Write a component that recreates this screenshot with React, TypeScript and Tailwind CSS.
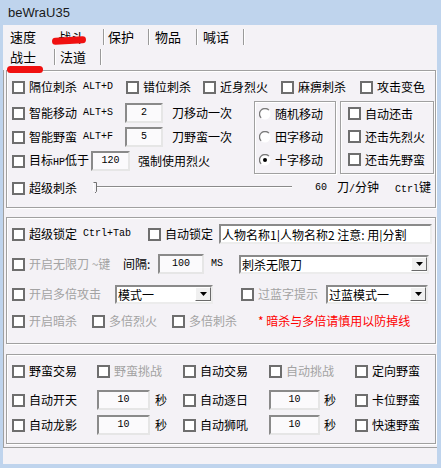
import type { ReactNode } from 'react'

const MONO = "font-['Liberation_Mono',monospace] text-[10px]"

function Box() {
  return <span className="block h-[13px] w-[13px] shrink-0 border-2 border-[#6e6e6e] bg-white" />
}

function Check({ label, off, w, children }: { label: ReactNode; off?: boolean; w?: string; children?: ReactNode }) {
  return (
    <div className={`flex shrink-0 items-center gap-[4px] ${w ?? ''}`}>
      <Box />
      <span className={`leading-[14px] ${off ? 'text-[#a3a3a3]' : ''}`}>{label}</span>
      {children}
    </div>
  )
}

function Radio({ on }: { on?: boolean }) {
  return (
    <svg width="12" height="12" viewBox="0 0 12 12" className="shrink-0">
      <circle cx="6" cy="6" r="5.5" fill="#fff" />
      <path d="M2.1 9.9A5.5 5.5 0 0 1 9.9 2.1" fill="none" stroke="#7a7a7a" strokeWidth="1.3" />
      {on && <circle cx="6" cy="6" r="2" fill="#000" />}
    </svg>
  )
}

function Edit({ v, w }: { v: string; w: string }) {
  return (
    <div
      className={`flex h-[20px] shrink-0 items-center justify-center border-2 border-t-[#8a8a8a] border-l-[#8a8a8a] border-r-[#e6e6e6] border-b-[#e6e6e6] bg-[#fbfafc] leading-[14px] ${MONO} ${w}`}
    >
      {v}
    </div>
  )
}

function Combo({ v, w }: { v: string; w: string }) {
  return (
    <div
      className={`flex h-[19px] shrink-0 items-center border-2 border-t-[#8a8a8a] border-l-[#8a8a8a] border-r-[#ececec] border-b-[#ececec] bg-white pl-[1px] ${w}`}
    >
      <span className="flex-1 overflow-hidden whitespace-nowrap leading-[15px]">{v}</span>
      <span className="flex h-[14px] w-[16px] shrink-0 items-center justify-center border border-t-white border-l-white border-r-[#6a6a6a] border-b-[#6a6a6a] bg-[#f0f0f0]">
        <svg width="7" height="4" viewBox="0 0 7 4">
          <path d="M0 0h7L3.5 4z" fill="#000" />
        </svg>
      </span>
    </div>
  )
}

function Sep() {
  return <span className="block h-[16px] w-[2px] shrink-0 border-l border-[#9a9a9a] bg-white" />
}

const GROUP = 'mr-[1px] border border-[#a0a0a0] pl-[5px] shadow-[inset_1px_1px_0_#fff,1px_1px_0_#fff]'

export default function App() {
  return (
    <div className="flex h-[468px] w-[441px] flex-col whitespace-nowrap bg-[#bfd4ed] font-['Noto_Sans_CJK_SC',sans-serif] text-[12px] leading-none text-black">
      <div className="flex h-[25px] shrink-0 items-center pl-[8px] font-['Liberation_Sans',sans-serif] text-[13px] text-[#1a1a1a]">
        beWraU35
      </div>

      <div className="relative mb-[4px] ml-[3px] mr-[4px] flex flex-1 flex-col bg-[#f4f2f6]">
        {/* tabs */}
        <div className="h-[45px] shrink-0 pt-[3px] text-[13px]">
          <div className="flex h-[17px] items-center pl-[7px]">
            <span className="w-[48px]">速度</span>
            <span className="w-[45px]">战斗</span>
            <Sep />
            <span className="ml-[3px] w-[40px]">保护</span>
            <Sep />
            <span className="ml-[5px] w-[41px]">物品</span>
            <Sep />
            <span className="ml-[5px] w-[40px]">喊话</span>
            <Sep />
          </div>
          <div className="mt-[3px] flex h-[17px] items-center pl-[7px]">
            <span className="w-[44px]">战士</span>
            <Sep />
            <span className="ml-[4px] w-[40px]">法道</span>
            <Sep />
          </div>
        </div>

        {/* marker strokes */}
        <div className="absolute left-[49px] top-[12px] h-[7px] w-[34px] -rotate-3 rounded-full bg-[#f01010]" />
        <div className="absolute left-[4px] top-[41px] h-[7px] w-[36px] rounded-full bg-[#f01010]" />

        <div className="border-b border-l border-[#a0a0a0] pb-[3px] pl-[2px]">
          {/* group 1 */}
          <div className={`${GROUP} pb-[9px] pt-[6px]`}>
            <div className="flex h-[20px] items-center">
              <Check label="隔位刺杀" w="w-[114px]">
                <span className={`ml-[2px] ${MONO}`}>ALT+D</span>
              </Check>
              <Check label="错位刺杀" w="w-[77px]" />
              <Check label="近身烈火" w="w-[78px]" />
              <Check label="麻痹刺杀" w="w-[79px]" />
              <Check label="攻击变色" />
            </div>

            <div className="mt-[4px] flex h-[73px]">
              <div className="flex w-[242px] flex-col">
                <div className="flex h-[24px] items-center">
                  <Check label="智能移动" w="w-[113px]">
                    <span className={`ml-[2px] ${MONO}`}>ALT+S</span>
                  </Check>
                  <Edit v="2" w="w-[38px]" />
                  <span className="ml-[9px]">刀移动一次</span>
                </div>
                <div className="flex h-[24px] items-center">
                  <Check label="智能野蛮" w="w-[113px]">
                    <span className={`ml-[2px] ${MONO}`}>ALT+F</span>
                  </Check>
                  <Edit v="5" w="w-[38px]" />
                  <span className="ml-[9px]">刀野蛮一次</span>
                </div>
                <div className="flex h-[24px] items-center">
                  <Check
                    label={
                      <>
                        目标<span className={MONO}>HP</span>低于
                      </>
                    }
                    w="w-[79px]"
                  />
                  <Edit v="120" w="w-[39px]" />
                  <span className="ml-[8px]">强制使用烈火</span>
                </div>
              </div>

              <div className="flex w-[82px] shrink-0 flex-col border border-[#a0a0a0] pl-[4px] shadow-[inset_1px_1px_0_#fff,1px_1px_0_#fff]">
                {[
                  ['随机移动', false],
                  ['田字移动', false],
                  ['十字移动', true],
                ].map(([t, on]) => (
                  <div key={t as string} className="flex h-[23px] items-center gap-[4px]">
                    <Radio on={on as boolean} />
                    <span>{t as string}</span>
                  </div>
                ))}
              </div>

              <div className="ml-[4px] flex w-[94px] shrink-0 flex-col border border-[#a0a0a0] pl-[7px] shadow-[inset_1px_1px_0_#fff,1px_1px_0_#fff]">
                <div className="flex h-[23px] items-center">
                  <Check label="自动还击" />
                </div>
                <div className="flex h-[23px] items-center">
                  <Check label="还击先烈火" />
                </div>
                <div className="flex h-[23px] items-center">
                  <Check label="还击先野蛮" />
                </div>
              </div>
            </div>

            <div className="mt-[4px] flex h-[20px] items-center">
              <Check label="超级刺杀" w="w-[80px]" />
              <svg width="200" height="20" viewBox="0 0 200 20" className="shrink-0">
                <path d="M5 8.5H200" stroke="#8a8a8a" strokeWidth="1" />
                <path d="M5 9.5H200" stroke="#ffffff" strokeWidth="1" />
                <path d="M1.5 4.5H4.5V13.5L3 15" fill="none" stroke="#707070" strokeWidth="1" />
                <path d="M1.5 5V13" fill="none" stroke="#ffffff" strokeWidth="1" />
              </svg>
              <span className={`ml-[23px] ${MONO}`}>60</span>
              <span className="ml-[10px]">
                刀<span className={MONO}>/</span>分钟
              </span>
              <span className="ml-[16px]">
                <span className={MONO}>Ctrl</span>键
              </span>
            </div>
          </div>

          {/* group 2 */}
          <div className={`${GROUP} mt-[9px] pb-[12px] pt-[6px]`}>
            <div className="flex h-[20px] items-center">
              <Check label="超级锁定" w="w-[136px]">
                <span className={`ml-[2px] ${MONO}`}>Ctrl+Tab</span>
              </Check>
              <Check label="自动锁定" w="w-[71px]" />
              <div className="flex h-[20px] w-[213px] shrink-0 items-center overflow-hidden whitespace-nowrap border-2 border-t-[#8a8a8a] border-l-[#8a8a8a] border-r-[#ececec] border-b-[#ececec] bg-white pl-[1px] leading-[15px]">
                人物名称1|人物名称2 注意: 用|分割
              </div>
            </div>

            <div className="mt-[10px] flex h-[20px] items-center">
              <Check label="开启无限刀 ~键" off w="w-[111px]" />
              <span className="w-[35px] shrink-0">间隔:</span>
              <Edit v="100" w="w-[46px]" />
              <span className={`ml-[7px] ${MONO}`}>MS</span>
              <Combo v="刺杀无限刀" w="ml-[16px] w-[190px]" />
            </div>

            <div className="mt-[10px] flex h-[20px] items-center">
              <Check label="开启多倍攻击" off w="w-[103px]" />
              <Combo v="模式一" w="w-[98px]" />
              <Check label="过蓝字提示" off w="ml-[28px] w-[85px]" />
              <Combo v="过蓝模式一" w="w-[102px]" />
            </div>

            <div className="mt-[7px] flex h-[20px] items-center">
              <Check label="开启暗杀" off w="w-[80px]" />
              <Check label="多倍烈火" off w="w-[80px]" />
              <Check label="多倍刺杀" off w="w-[86px]" />
              <span className="text-[#ff0000]">* 暗杀与多倍请慎用以防掉线</span>
            </div>
          </div>

          {/* group 3 */}
          <div className={`${GROUP} mt-[10px] pb-[8px] pt-[6px]`}>
            <div className="flex h-[20px] items-center">
              <Check label="野蛮交易" w="w-[85px]" />
              <Check label="野蛮挑战" off w="w-[86px]" />
              <Check label="自动交易" w="w-[86px]" />
              <Check label="自动挑战" off w="w-[86px]" />
              <Check label="定向野蛮" />
            </div>
            <div className="mt-[9px] flex h-[20px] items-center">
              <Check label="自动开天" w="w-[85px]" />
              <Edit v="10" w="w-[53px]" />
              <span className="ml-[5px] w-[28px] shrink-0">秒</span>
              <Check label="自动逐日" w="w-[86px]" />
              <Edit v="10" w="w-[51px]" />
              <span className="ml-[4px] w-[31px] shrink-0">秒</span>
              <Check label="卡位野蛮" />
            </div>
            <div className="mt-[5px] flex h-[20px] items-center">
              <Check label="自动龙影" w="w-[85px]" />
              <Edit v="10" w="w-[53px]" />
              <span className="ml-[5px] w-[28px] shrink-0">秒</span>
              <Check label="自动狮吼" w="w-[86px]" />
              <Edit v="10" w="w-[51px]" />
              <span className="ml-[4px] w-[31px] shrink-0">秒</span>
              <Check label="快速野蛮" />
            </div>
          </div>
        </div>
      </div>
    </div>
  )
}
